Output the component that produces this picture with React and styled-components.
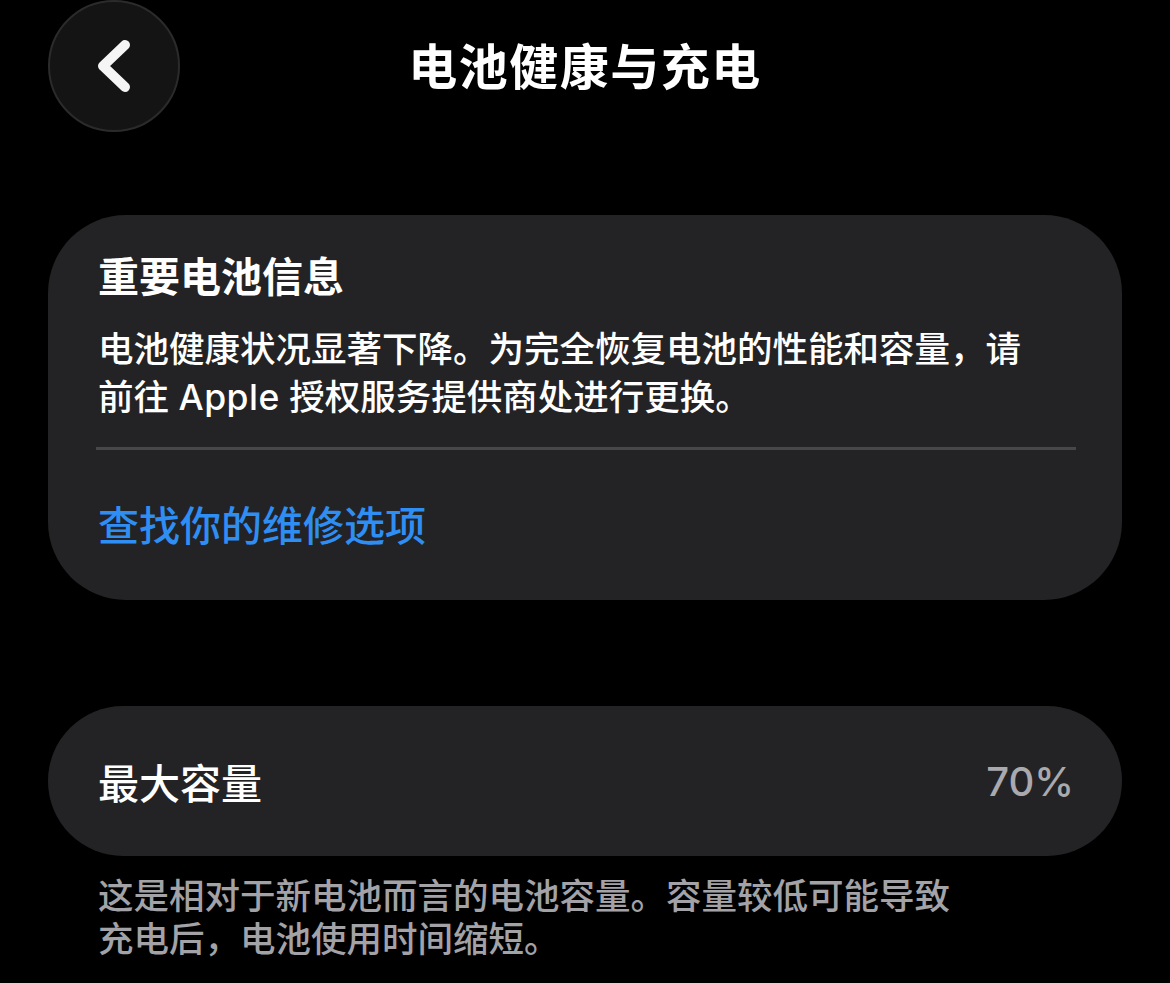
import styled, { createGlobalStyle } from "styled-components";

const GlobalStyle = createGlobalStyle`
html, body {
  margin: 0;
  padding: 0;
  background: #000000;
}
body {
  font-family: Inter, "Noto Sans CJK SC", sans-serif;
  color: #ffffff;
}
`

const Page = styled.div`
width: 1170px;
height: 983px;
overflow: hidden;
background: #000000;
display: flex;
flex-direction: column;
`

const Header = styled.div`
position: relative;
height: 132px;
display: flex;
align-items: center;
justify-content: center;
`

const BackButton = styled.button`
/* sits over the header, the title stays centred */
position: absolute;
left: 48px;
top: 0px;
width: 132px;
height: 132px;
border-radius: 50%;
background: #141414;
border: 2px solid #2b2b2b;
box-sizing: border-box;
display: flex;
align-items: center;
justify-content: center;
padding: 0;
`

const Title = styled.h1`
margin: 0;
margin-top: 4px;
font-size: 49px;
font-weight: 700;
line-height: 60px;
letter-spacing: 1.5px;
color: #ffffff;
`

const Card = styled.div`
margin: ${(p) => p.$top}px 48px 0 48px;
background: #232325;
border-radius: ${(p) => p.$radius}px;
box-sizing: border-box;
`

const InfoCard = styled(Card)`
height: 385px;
padding: 38px 48px 0 50px;
display: flex;
flex-direction: column;
`

const CardHeading = styled.div`
font-size: 41px;
font-weight: 700;
line-height: 48px;
`

const BodyText = styled.div`
margin-top: 25px;
font-size: 35.5px;
font-weight: 500;
line-height: 48px;
color: #ffffff;
`

const Latin = styled.span`
letter-spacing: 0.5px;
`

const Divider = styled.div`
margin: 25px -2px 0 -2px;
height: 3px;
background: #47474a;
`

const LinkText = styled.div`
margin-top: 52px;
font-size: 41px;
font-weight: 500;
line-height: 48px;
color: #2f8ef3;
`

const CapacityCard = styled(Card)`
height: 150px;
padding: 0 48px 0 50px;
display: flex;
align-items: center;
justify-content: space-between;
`

const RowLabel = styled.span`
font-size: 41px;
font-weight: 500;
color: #ffffff;
`

const RowValue = styled.span`
font-size: 40px;
font-weight: 500;
color: #a9a9ae;
`

const Footnote = styled.div`
margin: 19px 48px 0 98px;
font-size: 35.5px;
font-weight: 500;
line-height: 43px;
color: #a2a2a7;
`

function ChevronLeft() {
  return (
    <svg width="36" height="52" viewBox="0 0 36 52" fill="none">
      <path
        d="M29 5 L7 26 L29 47"
        stroke="#f5f5f5"
        strokeWidth="10"
        strokeLinecap="round"
        strokeLinejoin="round"
      />
    </svg>
  )
}

function App() {
  return (
    <Page>
      <GlobalStyle />
      <Header>
        <BackButton>
          <ChevronLeft />
        </BackButton>
        <Title>电池健康与充电</Title>
      </Header>

      <InfoCard $top={83} $radius={78}>
        <CardHeading>重要电池信息</CardHeading>
        <BodyText>
          电池健康状况显著下降。为完全恢复电池的性能和容量，请
          <br />
          前往 <Latin>Apple</Latin> 授权服务提供商处进行更换。
        </BodyText>
        <Divider />
        <LinkText>查找你的维修选项</LinkText>
      </InfoCard>

      <CapacityCard $top={106} $radius={75}>
        <RowLabel>最大容量</RowLabel>
        <RowValue>70%</RowValue>
      </CapacityCard>

      <Footnote>
        这是相对于新电池而言的电池容量。容量较低可能导致
        <br />
        充电后，电池使用时间缩短。
      </Footnote>
    </Page>
  )
}

export default App;
